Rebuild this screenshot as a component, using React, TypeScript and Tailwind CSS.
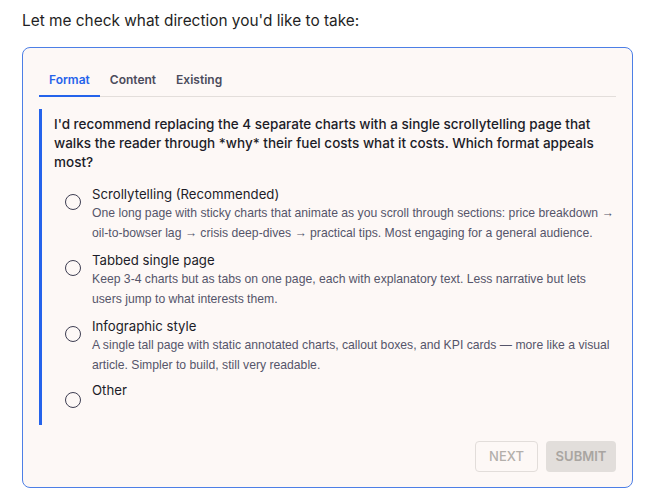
import { useState } from 'react';

const tabs = ['Format', 'Content', 'Existing'];

const options = [
  {
    title: 'Scrollytelling (Recommended)',
    desc: 'One long page with sticky charts that animate as you scroll through sections: price breakdown → oil-to-bowser lag → crisis deep-dives → practical tips. Most engaging for a general audience.',
  },
  {
    title: 'Tabbed single page',
    desc: 'Keep 3-4 charts but as tabs on one page, each with explanatory text. Less narrative but lets users jump to what interests them.',
  },
  {
    title: 'Infographic style',
    desc: 'A single tall page with static annotated charts, callout boxes, and KPI cards — more like a visual article. Simpler to build, still very readable.',
  },
  { title: 'Other', desc: '' },
];

export default function App() {
  const [active, setActive] = useState(0);
  const [picked, setPicked] = useState<number | null>(null);

  return (
    <div className="min-h-screen bg-white pl-[22px] pr-[14px] pt-[9px] font-['Inter',sans-serif]">
      <p className="text-[15.4px] leading-6 text-[#1f1f24]">Let me check what direction you'd like to take:</p>

      <div className="mt-[14px] rounded-lg border border-[#4d7fe6] bg-[#fdf8f6] px-4 pt-4 pb-[15px]">
        {/* tabs */}
        <div className="flex border-b border-[#e3dedb]">
          {tabs.map((t, i) => (
            <button
              key={t}
              onClick={() => setActive(i)}
              className={`-mb-px px-[10px] pt-2 pb-[7px] text-[12px] font-semibold leading-4 border-b-2 ${
                i === active ? 'border-[#2563eb] text-[#2563eb]' : 'border-transparent text-[#4b4b5c]'
              }`}
            >
              {t}
            </button>
          ))}
        </div>

        {/* question */}
        <div className="mt-3 border-l-[3px] border-[#2563eb] pl-3 pt-1.5 pb-2.5">
          <p className="text-[13.5px] font-medium leading-[19px] text-[#1c1c28]">
            I'd recommend replacing the 4 separate charts with a single scrollytelling page that walks the reader through *why* their fuel costs what it costs. Which format appeals most?
          </p>

          <div className="mt-[13px] flex flex-col gap-2 pl-[11px]">
            {options.map((o, i) => (
              <label
                key={o.title}
                className={`flex cursor-pointer items-start gap-[11px] ${o.desc ? '' : '-mt-0.5'}`}
                onClick={() => setPicked(i)}
              >
                <span
                  className={`flex h-4 w-4 shrink-0 items-center justify-center rounded-full border-[1.5px] border-[#3e3e52] ${
                    o.desc ? 'mt-[9px]' : 'mt-[11px]'
                  }`}
                >
                  {picked === i && <span className="h-2 w-2 rounded-full bg-[#2563eb]" />}
                </span>
                <span className="flex flex-col">
                  <span className="text-[13.2px] leading-[18px] text-[#1c1c28]">{o.title}</span>
                  {o.desc ? (
                    <span className="font-['Liberation_Sans',sans-serif] text-[12.2px] leading-5 text-[#55556a]">{o.desc}</span>
                  ) : (
                    <span className="h-4" />
                  )}
                </span>
              </label>
            ))}
          </div>
        </div>

        {/* actions */}
        <div className="mt-4 flex justify-end gap-2">
          <button className="h-[31px] w-[63px] rounded border border-[#e2ddda] text-[13px] font-medium text-[#b3afab]">
            NEXT
          </button>
          <button className="h-[31px] w-[70px] rounded bg-[#e2dedb] text-[13px] font-semibold text-[#a9a5a1]">
            SUBMIT
          </button>
        </div>
      </div>
    </div>
  );
}
